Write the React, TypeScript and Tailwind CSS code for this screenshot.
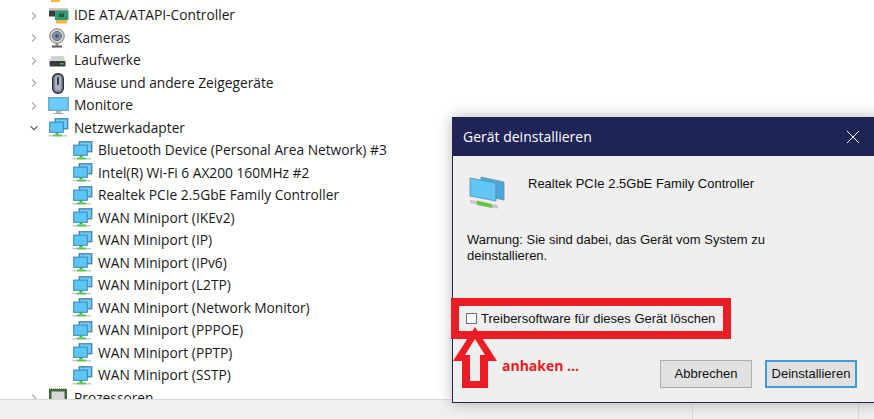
import React from "react";

function Chevron({ open }: { open?: boolean }) {
  return (
    <svg width="8" height="8" viewBox="0 0 8 8" className="shrink-0" fill="none" stroke={open ? "#555" : "#a6a6a6"} strokeWidth="1.1">
      {open ? <path d="M0.5 2.2 L4 5.7 L7.5 2.2" /> : <path d="M2.2 0.5 L5.7 4 L2.2 7.5" />}
    </svg>
  );
}

function NetIcon() {
  return (
    <svg width="21" height="20" viewBox="0 0 21 20" className="shrink-0">
      <rect x="7" y="0.5" width="13" height="10.5" fill="#2f8fcf" stroke="#5d7f99" strokeWidth="0.8" />
      <rect x="8" y="1.5" width="11" height="8.5" fill="#6fcbf5" />
      <rect x="1.5" y="4" width="14" height="10.5" fill="#3fb2ee" stroke="#4d87b0" strokeWidth="0.8" />
      <rect x="2.5" y="5" width="12" height="8.5" fill="#5cc6f7" />
      <rect x="7.5" y="14.5" width="3" height="2" fill="#3fae3f" />
      <rect x="5" y="16.5" width="9" height="2" fill="#57c557" />
      <rect x="0.5" y="17" width="4.5" height="1.5" fill="#c9c9c9" />
      <rect x="14" y="17" width="5" height="1.5" fill="#c9c9c9" />
    </svg>
  );
}

function BigNetIcon() {
  return (
    <svg width="38" height="34" viewBox="0 0 38 34" className="shrink-0">
      <path d="M13 1 L36 6 L36 24 L13 19 Z" fill="#4aa8dc" stroke="#6b8ea6" strokeWidth="0.8" />
      <path d="M2 2 L28 7 L28 25 L2 20 Z" fill="#53bdf0" stroke="#5a8fb3" strokeWidth="0.8" />
      <path d="M3 3 L27 8 L27 24 L3 19 Z" fill="#62c7f6" />
      <path d="M9 24.5 L24 28 L24 32 L9 29 Z" fill="#6cc24a" />
      <path d="M2 24 L9 25 L9 28.5 L2 27 Z" fill="#c8c8c8" />
      <path d="M24 28 L30 29 L30 32.5 L24 32 Z" fill="#c8c8c8" />
    </svg>
  );
}

function IdeIcon() {
  return (
    <svg width="20" height="16" viewBox="0 0 20 16" className="shrink-0 ml-[1px]">
      <rect x="0" y="0" width="19" height="2.5" fill="#c8c8c8" />
      <rect x="0" y="2.5" width="19" height="6" fill="#3c3c3c" />
      <rect x="6" y="3" width="13.5" height="9" fill="#2f9a6e" />
      <rect x="10" y="5.5" width="5" height="3.5" fill="#1f5a42" />
      <rect x="7" y="12" width="11" height="3.5" fill="#f2b544" />
    </svg>
  );
}

function CamIcon() {
  return (
    <svg width="16" height="20" viewBox="0 0 16 20" className="shrink-0 ml-[1px]">
      <circle cx="8" cy="8" r="7.3" fill="#d4d4d4" stroke="#7d7d7d" strokeWidth="1" />
      <circle cx="8" cy="8" r="4.5" fill="#8d97a3" stroke="#5f6a75" strokeWidth="1" />
      <circle cx="8" cy="8" r="2" fill="#2f5f94" />
      <rect x="6.5" y="15.5" width="3" height="2" fill="#8a8a8a" />
      <rect x="3" y="17.5" width="10" height="2" fill="#5c5c5c" />
    </svg>
  );
}

function DriveIcon() {
  return (
    <svg width="17" height="11" viewBox="0 0 17 11" className="shrink-0 ml-[1px] mt-[2px]">
      <path d="M2.5 0 H14.5 L16.5 5 H0.5 Z" fill="#d2d2d2" />
      <rect x="0.5" y="5" width="16" height="5.5" rx="1" fill="#3a3a3a" />
      <rect x="11" y="7" width="3.5" height="1.5" fill="#49c24f" />
    </svg>
  );
}

function MouseIcon() {
  return (
    <svg width="12" height="21" viewBox="0 0 12 21" className="shrink-0 ml-[4px]">
      <rect x="0.7" y="0.7" width="10.6" height="19.6" rx="5" fill="#7f8ca0" stroke="#2f2f2f" strokeWidth="1.4" />
      <rect x="3" y="2.5" width="6" height="15" rx="3" fill="#a9b3c2" />
      <rect x="5" y="4" width="2" height="8" rx="1" fill="#3a3a3a" />
    </svg>
  );
}

function MonitorIcon() {
  return (
    <svg width="21" height="18" viewBox="0 0 21 18" className="shrink-0">
      <rect x="0.5" y="0.5" width="20" height="13" fill="#47b8f2" stroke="#7396b0" strokeWidth="0.8" />
      <rect x="1.5" y="1.5" width="18" height="11" fill="#6ccbf7" />
      <rect x="8" y="14" width="5" height="2" fill="#b9b9b9" />
      <rect x="5.5" y="16" width="10" height="1.2" fill="#a9a9a9" />
    </svg>
  );
}

function CpuIcon() {
  return (
    <svg width="20" height="20" viewBox="0 0 20 20" className="shrink-0">
      <rect x="1" y="1" width="18" height="18" fill="#3d6b3f" />
      <rect x="3.5" y="3.5" width="13" height="13" fill="#d7d7d7" />
      <path d="M1 0.5 H19" stroke="#c9a23f" strokeWidth="1" strokeDasharray="1 1" />
    </svg>
  );
}

function Category({ icon, label, open }: { icon: React.ReactNode; label: string; open?: boolean }) {
  return (
    <div className="h-[22.5px] flex items-center pl-[30px]">
      <Chevron open={open} />
      <div className="w-[22px] ml-[10px] flex items-center justify-start h-0">{icon}</div>
      <span className="ml-[4px] whitespace-nowrap">{label}</span>
    </div>
  );
}

function Device({ label }: { label: string }) {
  return (
    <div className="h-[22.5px] flex items-center pl-[72px]">
      <div className="w-[22px] h-0 flex items-center"><NetIcon /></div>
      <span className="ml-[4px] whitespace-nowrap">{label}</span>
    </div>
  );
}

const devices = [
  "Bluetooth Device (Personal Area Network) #3",
  "Intel(R) Wi-Fi 6 AX200 160MHz #2",
  "Realtek PCIe 2.5GbE Family Controller",
  "WAN Miniport (IKEv2)",
  "WAN Miniport (IP)",
  "WAN Miniport (IPv6)",
  "WAN Miniport (L2TP)",
  "WAN Miniport (Network Monitor)",
  "WAN Miniport (PPPOE)",
  "WAN Miniport (PPTP)",
  "WAN Miniport (SSTP)",
];

export default function App() {
  return (
    <div className="relative w-[874px] h-[419px] overflow-hidden bg-white flex flex-col">
      <div className="h-[399px] overflow-hidden text-[13.75px] text-[#1a1a1a] font-['Open_Sans','Noto_Sans',sans-serif]">
        <div className="h-[2px] w-[9px] ml-[51px] bg-[#f2b544]" />
        <div className="h-[2.25px]" />
        <Category icon={<IdeIcon />} label="IDE ATA/ATAPI-Controller" />
        <Category icon={<CamIcon />} label="Kameras" />
        <Category icon={<DriveIcon />} label="Laufwerke" />
        <Category icon={<MouseIcon />} label="Mäuse und andere Zeigegeräte" />
        <Category icon={<MonitorIcon />} label="Monitore" />
        <Category icon={<NetIcon />} label="Netzwerkadapter" open />
        {devices.map((d) => <Device key={d} label={d} />)}
        <Category icon={<CpuIcon />} label="Prozessoren" />
      </div>
      <div className="flex-1 bg-[#f0f0f0] border-t border-[#d9d9d9] flex justify-end">
        <div className="w-[167px] border-l border-r border-[#dcdcdc] mr-[15px]" />
      </div>

      {/* Dialog */}
      <div className="absolute left-[452px] top-[117px] w-[430px] h-[286px] border border-[#1f2457] bg-[#efefef] shadow-[0_0_14px_rgba(0,0,0,0.28)] flex flex-col font-['Liberation_Sans',sans-serif] text-[13px] text-[#111]">
        <div className="h-[38px] bg-[#1f2457] flex items-center pl-[10px] pb-[2px] text-white text-[14px] font-['Open_Sans',sans-serif]">
          Gerät deinstallieren
          <svg width="14" height="14" viewBox="0 0 14 14" className="absolute left-[393px] top-[12px]" stroke="#fff" strokeWidth="1" fill="none">
            <path d="M1 1 L13 13 M13 1 L1 13" />
          </svg>
        </div>
        <div className="flex pl-[15px] pt-[20px] h-[66px]">
          <BigNetIcon />
          <span className="ml-[22px] whitespace-nowrap leading-[16px]">Realtek PCIe 2.5GbE Family Controller</span>
        </div>
        <div className="pl-[14px] mt-[10px] leading-[16px]">
          Warnung: Sie sind dabei, das Gerät vom System zu
          <br />
          deinstallieren.
        </div>
        <div className="flex items-center pl-[13px] mt-[44px] h-[20px]">
          <span className="w-[11px] h-[11px] border border-[#707070] bg-white" />
          <span className="ml-[4px] pt-[1px] whitespace-nowrap">Treibersoftware für dieses Gerät löschen</span>
        </div>
        <div className="flex pl-[207px] gap-[13px] mt-[32px]">
          <button className="w-[92px] h-[28px] bg-[#e1e1e1] border border-[#adadad]">Abbrechen</button>
          <button className="w-[92px] h-[28px] bg-[#e1e1e1] border-2 border-[#3f9ae0]">Deinstallieren</button>
        </div>
      </div>

      {/* Annotations */}
      <div className="absolute left-[451px] top-[298px] w-[280px] h-[41px] border-[8px] border-[#ed1c24]" />
      <svg width="50" height="64" viewBox="0 0 50 64" className="absolute left-[450px] top-[325px]">
        <path fillRule="evenodd" fill="#ed1c24" d="M25 2 L3 36 L12 36 L12 63 L38 63 L38 36 L47 36 Z M25 14 L15 30 L20 30 L20 56 L30 56 L30 30 L35 30 Z" />
      </svg>
      <span className="absolute left-[502px] top-[355px] text-[14px] font-bold text-[#ed1c24] font-['Open_Sans',sans-serif] whitespace-nowrap">anhaken ...</span>
    </div>
  );
}
